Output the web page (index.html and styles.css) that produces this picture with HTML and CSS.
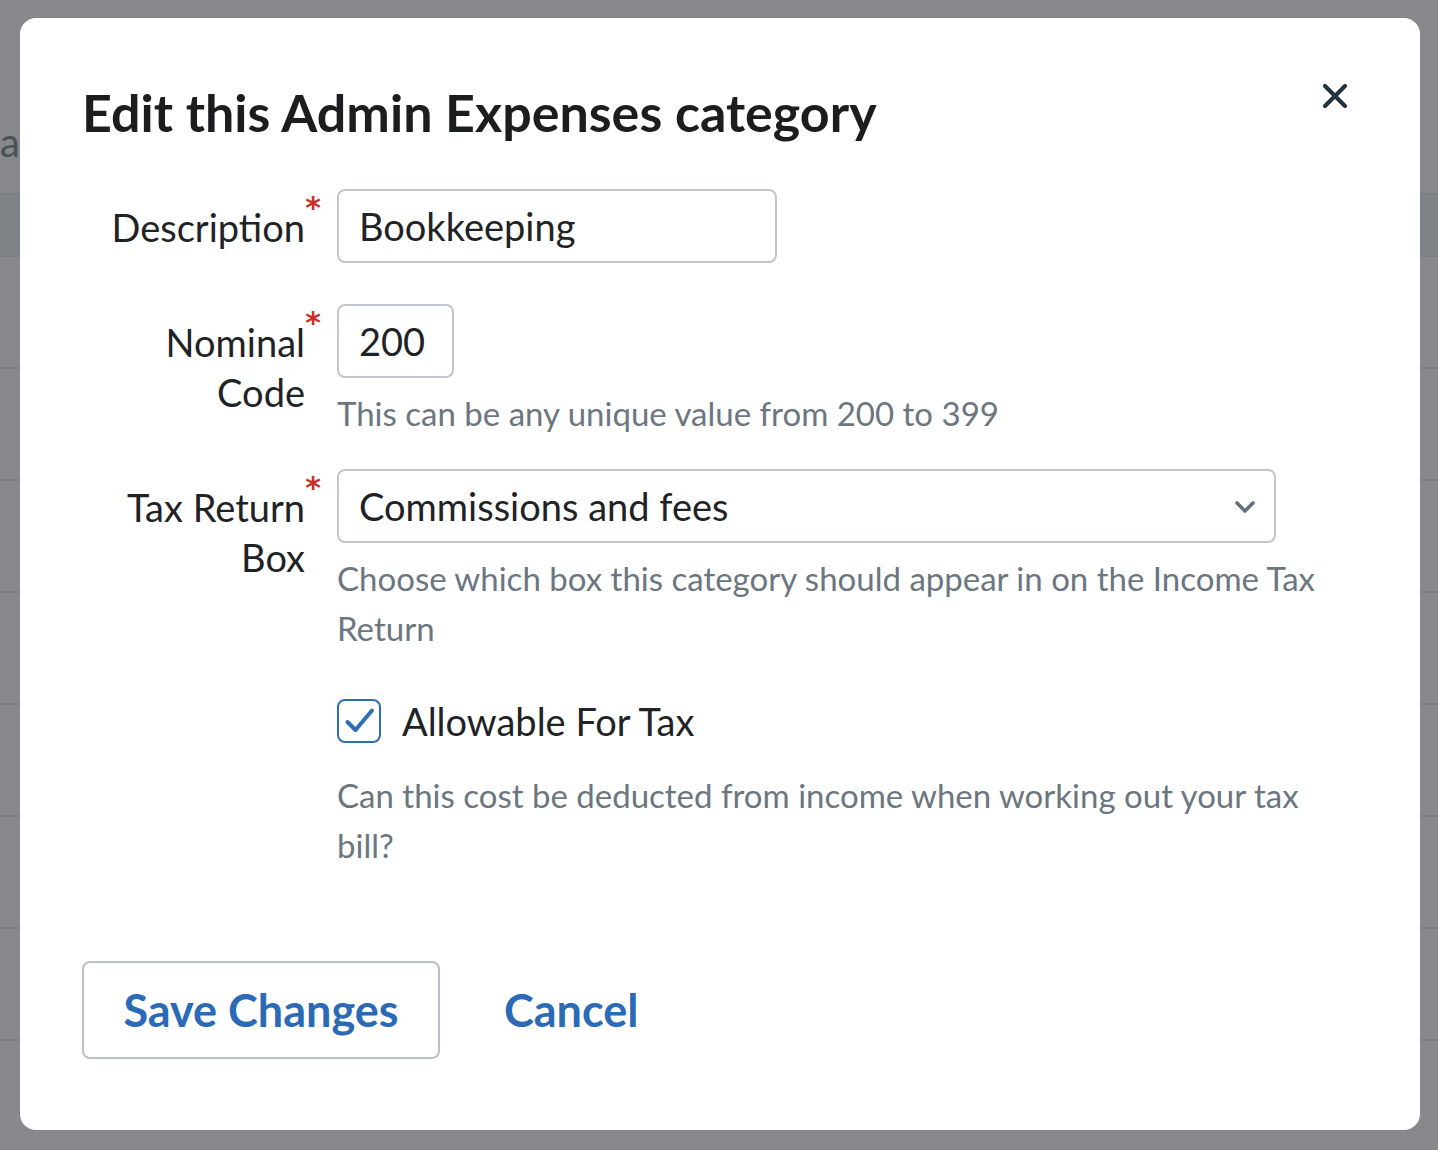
FILE: index.html
```html
<!DOCTYPE html>
<html lang="en">
<head>
<meta charset="utf-8">
<title>Edit category</title>
<link rel="stylesheet" href="styles.css">
</head>
<body>
<div class="page">
  <div class="page-title">a</div>
  <div class="table">
    <div class="table-head"></div>
    <div class="table-row"></div>
    <div class="table-row"></div>
    <div class="table-row"></div>
    <div class="table-row"></div>
    <div class="table-row"></div>
    <div class="table-row"></div>
    <div class="table-row"></div>
    <div class="table-row"></div>
  </div>
</div>

<div class="modal" role="dialog">
  <button class="close" aria-label="Close">
    <svg width="26" height="26" viewBox="0 0 26 26"><path d="M3 3 L23 23 M23 3 L3 23" stroke="#26333e" stroke-width="4.2" stroke-linecap="round" fill="none"/></svg>
  </button>
  <h1 class="title">Edit this Admin Expenses category</h1>

  <div class="form">
    <div class="row row-desc">
      <label class="label"><span class="label-text">Description</span><span class="req">*</span></label>
      <div class="field">
        <input class="input input-desc" type="text" value="Bookkeeping">
      </div>
    </div>

    <div class="row row-code">
      <label class="label"><span class="label-text">Nominal<br>Code</span><span class="req">*</span></label>
      <div class="field">
        <input class="input input-code" type="text" value="200">
        <p class="help">This can be any unique value from 200 to 399</p>
      </div>
    </div>

    <div class="row row-box">
      <label class="label"><span class="label-text">Tax Return<br>Box</span><span class="req">*</span></label>
      <div class="field">
        <div class="select">
          <span class="select-value">Commissions and fees</span>
          <svg class="chevron" width="22" height="14" viewBox="0 0 22 14"><path d="M3 3 L11 11 L19 3" stroke="#66707a" stroke-width="3.6" stroke-linecap="round" stroke-linejoin="round" fill="none"/></svg>
        </div>
        <p class="help">Choose which box this category should appear in on the Income Tax Return</p>
      </div>
    </div>

    <div class="row row-check">
      <div class="label"></div>
      <div class="field">
        <div class="check-line">
          <span class="checkbox">
            <svg width="44" height="44" viewBox="0 0 44 44"><path d="M10.5 23 L18.5 31 L35 11.5" stroke="#2f6db5" stroke-width="4" stroke-linecap="round" stroke-linejoin="round" fill="none"/></svg>
          </span>
          <span class="check-label">Allowable For Tax</span>
        </div>
        <p class="help help-check">Can this cost be deducted from income when working out your tax bill?</p>
      </div>
    </div>
  </div>

  <div class="actions">
    <button class="btn btn-save">Save Changes</button>
    <button class="btn-link">Cancel</button>
  </div>
</div>
</body>
</html>
```

FILE: styles.css
```css
html, body {
  margin: 0;
  padding: 0;
}
body {
  background: #86888b;
  font-family: "Lato", "Liberation Sans", sans-serif;
  width: 1438px;
  height: 1150px;
  overflow: hidden;
  position: relative;
}
.page {
  padding-top: 118px;
}
.page-title {
  font-size: 40px;
  line-height: 48px;
  color: #4a5058;
  padding-left: 0;
  height: 75px;
}
.table-head {
  height: 60px;
  background: #7f8388;
  border-top: 2px solid #7a7d81;
  border-bottom: 2px solid #7a7d81;
}
.table-row {
  height: 110px;
  border-bottom: 2px solid #7a7d81;
}

.modal {
  position: absolute;
  left: 20px;
  top: 18px;
  width: 1400px;
  height: 1112px;
  box-sizing: border-box;
  background: #ffffff;
  border-radius: 16px;
  padding: 62px 62px 0 62px;
  color: #1f2326;
}
.close {
  position: absolute;
  top: 65px;
  right: 72px;
  width: 26px;
  height: 26px;
  padding: 0;
  border: 0;
  background: transparent;
  display: flex;
}
.title {
  margin: 0;
  font-size: 52px;
  line-height: 64px;
  font-weight: 700;
  color: #1b1d1f;
}
.form {
  margin-top: 45px;
}
.row {
  display: grid;
  grid-template-columns: 223px 1fr;
  column-gap: 32px;
}
.label {
  position: relative;
  text-align: right;
  font-size: 38px;
  line-height: 50px;
  padding-top: 13px;
  color: #1f2326;
}
.req {
  position: absolute;
  right: -16px;
  top: 4px;
  color: #c8302c;
  font-family: "DejaVu Sans", sans-serif;
  font-size: 30px;
  line-height: 30px;
  font-weight: 700;
}
.field {
  display: flex;
  flex-direction: column;
  align-items: flex-start;
}
.input {
  box-sizing: border-box;
  height: 74px;
  border: 2px solid #c2c6cb;
  border-radius: 8px;
  padding: 0 20px;
  font-family: inherit;
  font-size: 38px;
  color: #1f2326;
  background: #fff;
  outline: none;
}
.input-desc { width: 440px; }
.input-code { width: 117px; }
.row-code { margin-top: 41px; }
.row-box { margin-top: 31px; }
.help {
  margin: 10px 0 0 0;
  font-size: 33px;
  line-height: 50px;
  color: #6b7680;
}
.select {
  box-sizing: border-box;
  width: 939px;
  height: 74px;
  border: 2px solid #c2c6cb;
  border-radius: 8px;
  padding: 0 18px 0 20px;
  display: flex;
  align-items: center;
  justify-content: space-between;
  font-size: 38px;
  color: #1f2326;
}
.chevron { margin-top: 2px; }
.row-check { margin-top: 43px; }
.check-line {
  display: flex;
  align-items: center;
  gap: 21px;
}
.checkbox {
  box-sizing: border-box;
  width: 44px;
  height: 44px;
  border: 2.5px solid #2f6db5;
  border-radius: 8px;
  display: flex;
  align-items: center;
  justify-content: center;
  overflow: hidden;
}
.checkbox svg { flex: none; }
.check-label {
  font-size: 38px;
  line-height: 50px;
  color: #1f2326;
}
.help-check { margin-top: 24px; }

.actions {
  margin-top: 91px;
  display: flex;
  align-items: center;
  gap: 64px;
}
.btn {
  box-sizing: border-box;
  height: 98px;
  width: 358px;
  padding: 0;
  border: 2px solid #bcc0c6;
  border-radius: 8px;
  background: #fff;
  font-family: inherit;
  font-size: 45px;
  font-weight: 700;
  color: #2b6ab6;
}
.btn-link {
  border: 0;
  background: transparent;
  padding: 0;
  font-family: inherit;
  font-size: 45px;
  font-weight: 700;
  color: #2b6ab6;
}
```
